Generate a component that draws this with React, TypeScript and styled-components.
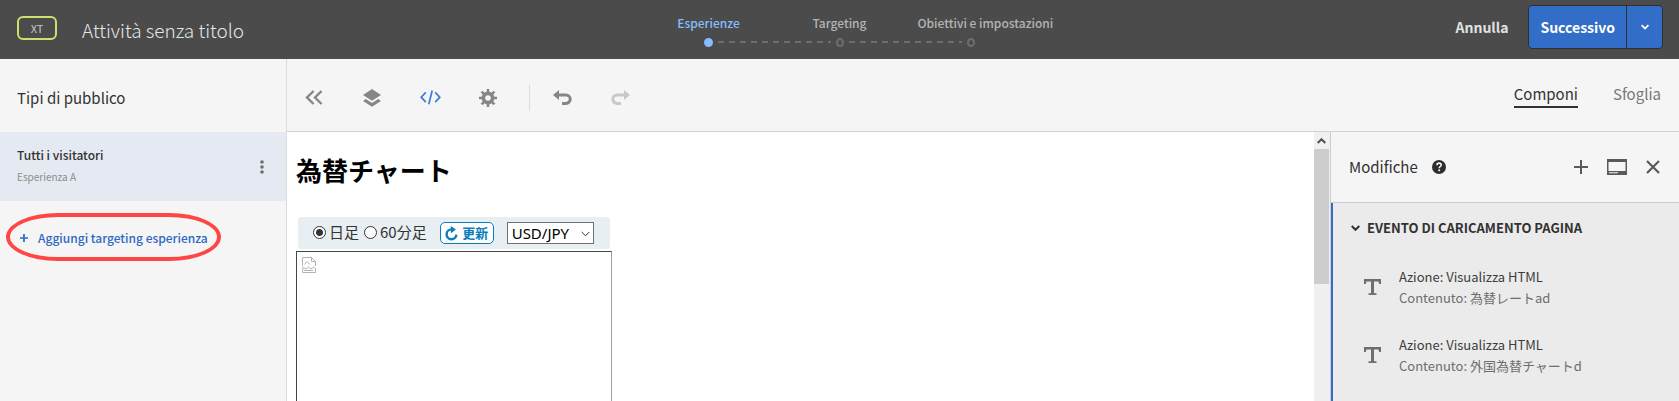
import React from "react";
import styled, { createGlobalStyle } from "styled-components";

const GlobalStyle = createGlobalStyle`
  *, *::before, *::after { box-sizing: border-box; }
  body {
    margin: 0;
    background: #f5f5f5;
    color: #323232;
    font-family: "Noto Sans CJK JP", "Noto Sans", sans-serif;
    font-size: 13px;
    line-height: 20px;
  }
  button, select, input { font: inherit; color: inherit; margin: 0; }
  button { border: 0; padding: 0; background: none; cursor: pointer; }
  h1, h2, h3, p, ul, ol { margin: 0; padding: 0; }
  ul, ol { list-style: none; }
  svg { display: block; }
`;

const Page = styled.div`
  display: flex;
  flex-direction: column;
  min-height: 100vh;
`;

/* ---------- top bar ---------- */

const TopBar = styled.header`
  display: grid;
  grid-template-columns: 1fr auto 1fr;
  height: 59px;
  background: #4b4b4b;
  color: #e6e6e6;
`;

const TitleGroup = styled.div`
  display: flex;
  align-items: center;
  gap: 25px;
  padding: 0 0 3px 17px;
`;

const TypeBadge = styled.span`
  width: 40px;
  height: 24px;
  border: 2px solid #d2dd6c;
  border-radius: 6px;
  font-size: 11px;
  line-height: 21px;
  text-align: center;
  color: #c8c8c8;
`;

const ActivityTitle = styled.h1`
  padding-top: 3px;
  font-size: 19px;
  font-weight: 300;
  line-height: 28px;
  white-space: nowrap;
`;

const Steps = styled.ol`
  display: flex;
  gap: 25px;
  padding-top: 14px;
`;

const Step = styled.li<{ $active?: boolean }>`
  position: relative;
  display: flex;
  flex-direction: column;
  align-items: center;
  width: 106px;
  font-size: 12px;
  font-weight: 500;
  color: ${(p) => (p.$active ? "#86bdff" : "#b4b4b4")};

  &:not(:last-child)::after {
    content: "";
    position: absolute;
    top: 27px;
    left: 62px;
    width: 113px;
    height: 2px;
    background: repeating-linear-gradient(90deg, #6e6e6e 0 6px, transparent 6px 11px);
  }
`;

const StepLabel = styled.span`
  min-width: 100%;
  text-align: center;
  white-space: nowrap;
  line-height: 18px;
  align-self: flex-start;
`;

const StepDot = styled.span<{ $active?: boolean }>`
  width: ${(p) => (p.$active ? "9px" : "8px")};
  height: 9px;
  margin-top: 6px;
  border-radius: 50%;
  border: 2px solid ${(p) => (p.$active ? "#86bdff" : "#6e6e6e")};
  background: ${(p) => (p.$active ? "#86bdff" : "transparent")};
`;

const TopActions = styled.div`
  display: flex;
  align-items: flex-start;
  justify-content: flex-end;
  gap: 20px;
  padding: 5px 16px 0 0;
  font-size: 14px;
  font-weight: 700;
`;

const CancelButton = styled.button`
  height: 44px;
  color: #e1e1e1;
`;

const SplitButton = styled.div`
  display: flex;
  height: 44px;
  border: 1px solid #2f2f2f;
  border-radius: 4px;
  background: #326ec8;
  color: #ffffff;
`;

const NextButton = styled.button`
  padding: 0 11px;
  border-right: 1px solid #2f2f2f;
`;

const NextMenuButton = styled.button`
  display: grid;
  place-items: center;
  width: 35px;
`;

/* ---------- left column ---------- */

const Body = styled.div`
  flex: 1;
  display: grid;
  grid-template-columns: 287px minmax(0, 1fr);
`;

const Sidebar = styled.aside`
  border-right: 1px solid #dcdcdc;
`;

const SidebarTitle = styled.h2`
  display: flex;
  align-items: center;
  height: 73px;
  padding: 5px 17px 0;
  font-size: 15px;
  font-weight: 400;
`;

const Audience = styled.div`
  display: flex;
  align-items: center;
  justify-content: space-between;
  height: 69px;
  padding: 0 17px;
  background: #e5e9f1;
`;

const AudienceText = styled.div`
  padding-bottom: 3px;
`;

const AudienceName = styled.p`
  font-size: 12px;
  font-weight: 500;
  line-height: 24px;
`;

const ExperienceName = styled.p`
  font-size: 10px;
  color: #8c8c8c;
`;

const MoreButton = styled.button`
  width: 9px;
  color: #6e6e6e;
`;

const AddTargeting = styled.button`
  position: relative;
  display: flex;
  align-items: center;
  gap: 10px;
  height: 48px;
  margin: 12px 0 0 6px;
  padding: 2px 13px 0 14px;
  font-size: 12px;
  font-weight: 500;
  color: #2d69c3;
  white-space: nowrap;
`;

const Highlight = styled.span`
  position: absolute;
  inset: 0;
  border: 4px solid #ff4646;
  border-radius: 52px / 24px;
`;

/* ---------- editor ---------- */

const Editor = styled.main`
  display: flex;
  flex-direction: column;
`;

const Toolbar = styled.div`
  display: flex;
  align-items: center;
  justify-content: space-between;
  height: 73px;
  padding: 0 18px 0 7px;
  border-bottom: 1px solid #d2d2d2;
`;

const ToolGroup = styled.div`
  display: flex;
  align-items: center;
  padding-top: 5px;
`;

const Tool = styled.button<{ $tone?: "active" | "disabled" }>`
  display: grid;
  place-items: center;
  width: 40px;
  height: 40px;
  margin-right: 18px;
  color: ${(p) =>
    p.$tone === "active" ? "#3c7dd7" : p.$tone === "disabled" ? "#c8c8c8" : "#868686"};
`;

const ToolDivider = styled.span`
  width: 1px;
  height: 26px;
  margin: 0 12px 0 3px;
  background: #dcdcdc;
`;

const Modes = styled.nav`
  display: flex;
  gap: 35px;
  font-size: 15px;
`;

const Mode = styled.a<{ $active?: boolean }>`
  line-height: 24px;
  text-decoration: none;
  color: ${(p) => (p.$active ? "#323232" : "#787878")};
  border-bottom: 2px solid ${(p) => (p.$active ? "#323232" : "transparent")};
`;

const Workspace = styled.div`
  flex: 1;
  display: grid;
  grid-template-columns: minmax(0, 1fr) 16px 349px;
`;

const Preview = styled.section`
  display: flex;
  flex-direction: column;
  align-items: flex-start;
  padding: 20px 9px 0;
  background: #ffffff;
  color: #000000;
`;

const PreviewTitle = styled.h2`
  font-size: 26px;
  line-height: 36px;
`;

const ChartForm = styled.form`
  display: flex;
  align-items: center;
  width: 312px;
  height: 32px;
  margin: 29px 0 2px 2px;
  padding-left: 15px;
  border-radius: 3px;
  background: #e8eff2;
  color: #333333;
  font-size: 15px;
`;

const Choice = styled.label`
  display: flex;
  align-items: center;
  gap: 3px;
  margin-right: 5px;
  padding-bottom: 2px;
  white-space: nowrap;
`;

const Radio = styled.input`
  appearance: none;
  width: 13px;
  height: 13px;
  border: 1px solid #333333;
  border-radius: 50%;
  background: #ffffff;

  &:checked {
    background: radial-gradient(circle, #333333 0 3px, #ffffff 4px);
  }
`;

const RefreshButton = styled.button`
  display: flex;
  align-items: center;
  justify-content: center;
  gap: 4px;
  width: 54px;
  height: 22px;
  margin: 0 13px 0 8px;
  border: 1px solid #0a7dbb;
  border-radius: 5px;
  background: #ffffff;
  color: #0a7dbb;
  font-size: 13px;
  font-weight: 700;
  white-space: nowrap;
`;

const SelectBox = styled.div`
  position: relative;
  width: 87px;
  height: 22px;

  svg {
    position: absolute;
    top: 9px;
    right: 4px;
    pointer-events: none;
  }
`;

const PairSelect = styled.select`
  appearance: none;
  display: block;
  width: 100%;
  height: 100%;
  padding: 0 4px;
  border: 1px solid #707070;
  border-radius: 0;
  background: #ffffff;
  color: #000000;
  font-family: "Noto Sans", sans-serif;
  font-size: 15px;
  line-height: 20px;
`;

const ChartFrame = styled.div`
  flex: 1;
  width: 316px;
  padding: 5px;
  border: 1px solid #464646;
  border-right-color: #a0a0a0;
  border-bottom: 0;
`;

const ScrollTrack = styled.div`
  display: flex;
  flex-direction: column;
  align-items: center;
  padding-right: 1px;
  background: #f0f0f0;
  color: #505050;
`;

const ScrollArrow = styled.span`
  display: grid;
  place-items: center;
  height: 17px;
`;

const ScrollThumb = styled.span`
  width: 100%;
  height: 135px;
  background: #cdcdcd;
`;

/* ---------- changes panel ---------- */

const Panel = styled.aside`
  display: flex;
  flex-direction: column;
  border-left: 1px solid #cdcdcd;
`;

const PanelHeader = styled.div`
  display: flex;
  align-items: center;
  height: 71px;
  padding: 0 19px 0 18px;
  border-bottom: 1px solid #cdcdcd;
  color: #5a5a5a;
`;

const PanelTitle = styled.h2`
  margin-right: 14px;
  font-size: 15px;
  font-weight: 400;
  color: #323232;
`;

const PanelTools = styled.div`
  display: flex;
  align-items: center;
  gap: 19px;
  margin-left: auto;
`;

const ChangeGroup = styled.section`
  flex: 1;
  border-left: 2px solid #326ec8;
  padding-top: 13px;
  background: #ebebeb;
`;

const GroupToggle = styled.button`
  display: flex;
  align-items: center;
  gap: 7px;
  height: 24px;
  margin: 0 0 25px 18px;
  font-size: 13px;
  font-weight: 700;
  white-space: nowrap;
`;

const Change = styled.li`
  display: flex;
  align-items: center;
  gap: 18px;
  height: 44px;
  margin-bottom: 24px;
  padding-left: 31px;
  color: #6e6e6e;
`;

const ChangeText = styled.div`
  line-height: 21px;
  white-space: nowrap;
`;

const ChangeAction = styled.p`
  color: #3c3c3c;
`;

/* ---------- icons ---------- */

const Chevron = ({ size = 9, width = 1, up = false }: { size?: number; width?: number; up?: boolean }) => (
  <svg width={size} height="6" viewBox="0 0 9 6" fill="none" stroke="currentColor" strokeWidth={width}>
    <path d={up ? "M.7 5 4.5 1.2 8.3 5" : "M.7 1 4.5 4.8 8.3 1"} />
  </svg>
);

const CollapseIcon = () => (
  <svg width="18" height="15" viewBox="0 0 18 15" fill="none" stroke="currentColor" strokeWidth="2.4">
    <path d="M8.6 1 2 7.5 8.6 14M16.6 1 10 7.5l6.6 6.5" />
  </svg>
);

const LayersIcon = () => (
  <svg width="18" height="18" viewBox="0 0 18 18" fill="currentColor">
    <path d="M9 0 18 5.9 9 11.8 0 5.9Z" />
    <path d="M2.8 10 9 14 15.2 10 18 11.9 9 17.8 0 11.9Z" />
  </svg>
);

const CodeIcon = () => (
  <svg width="21" height="15" viewBox="0 0 21 15" fill="none" stroke="currentColor" strokeWidth="1.7">
    <path d="M5.8 2.3 1.2 7.2l4.6 4.9M15.2 2.3l4.6 4.9-4.6 4.9M12.2.5 8.8 14.3" />
  </svg>
);

const GearIcon = () => (
  <svg width="18" height="18" viewBox="0 0 18 18" fill="none" stroke="currentColor">
    <circle cx="9" cy="9" r="4.6" strokeWidth="3.6" />
    <path
      strokeWidth="2.6"
      d="M9 0v3M9 15v3M0 9h3M15 9h3M2.6 2.6l2.2 2.2M13.2 13.2l2.2 2.2M2.6 15.4l2.2-2.2M13.2 4.8l2.2-2.2"
    />
  </svg>
);

const UndoIcon = ({ flip = false }: { flip?: boolean }) => (
  <svg width="19" height="15" viewBox="0 0 19 15">
    <g transform={flip ? "matrix(-1 0 0 1 19 0)" : undefined}>
      <path d="M0 5 6 0v10Z" fill="currentColor" />
      <path d="M5 5h8a4.2 4.2 0 0 1 0 8.4H9" fill="none" stroke="currentColor" strokeWidth="3" />
    </g>
  </svg>
);

const MoreIcon = () => (
  <svg width="4" height="14" viewBox="0 0 4 14" fill="currentColor">
    <circle cx="2" cy="2" r="1.8" />
    <circle cx="2" cy="7" r="1.8" />
    <circle cx="2" cy="12" r="1.8" />
  </svg>
);

const PlusIcon = ({ size, width }: { size: number; width: number }) => (
  <svg width={size} height={size} viewBox="0 0 14 14" stroke="currentColor" strokeWidth={width}>
    <path d="M7 0v14M0 7h14" />
  </svg>
);

const RefreshIcon = () => (
  <svg width="13" height="15" viewBox="0 0 13 15">
    <path d="M7 3.4H6.5A4.9 4.9 0 1 0 11.4 8.6" fill="none" stroke="currentColor" strokeWidth="2.4" />
    <path d="M5.8 0 11 3.6 5.8 7.2Z" fill="currentColor" />
  </svg>
);

const BrokenImageIcon = () => (
  <svg width="14" height="16" viewBox="0 0 14 16" fill="none" stroke="#b4b4b4">
    <path d="M.5 9V.5h9l4 4V9M9.5.5v4h4M.5 15.5h13v-4l-2-1.5-2.5 2-2.5-2-2.5 2-3-2z" />
    <path d="M2.5 7.5 5 4.5l3 3M2 13.5h9" />
  </svg>
);

const HelpIcon = () => (
  <svg width="14" height="14" viewBox="0 0 14 14">
    <circle cx="7" cy="7" r="7" fill="#2d2d2d" />
    <path d="M4.9 5.2C5 3.7 6 3.1 7.1 3.1c1.2 0 2.1.7 2.1 1.8 0 1.5-2 1.7-2 3.3" fill="none" stroke="#f5f5f5" strokeWidth="1.6" />
    <rect x="6.3" y="9.4" width="1.8" height="1.8" fill="#f5f5f5" />
  </svg>
);

const WindowIcon = () => (
  <svg width="20" height="16" viewBox="0 0 20 16">
    <path d="M0 0h20v16H0ZM1.500 3v9h17V3ZM2 13.200v1h9v-1Z" fill="currentColor" fillRule="evenodd" />
  </svg>
);

const CloseIcon = () => (
  <svg width="14" height="14" viewBox="0 0 14 14" stroke="currentColor" strokeWidth="2.2">
    <path d="M1 1l12 12M13 1 1 13" />
  </svg>
);

const TextIcon = () => (
  <svg width="17" height="16" viewBox="0 0 17 16" fill="currentColor">
    <path d="M0 0h17v5h-1.800L14.500 2.600H10v11.600h2.500V16h-8v-1.800H7V2.600H2.500L1.800 5H0Z" />
  </svg>
);

const changes = ["為替レートad", "外国為替チャートd"];

export default function App() {
  return (
    <Page>
      <GlobalStyle />
      <TopBar>
        <TitleGroup>
          <TypeBadge>XT</TypeBadge>
          <ActivityTitle>Attività senza titolo</ActivityTitle>
        </TitleGroup>
        <Steps>
          <Step $active>
            <StepLabel>Esperienze</StepLabel>
            <StepDot $active />
          </Step>
          <Step>
            <StepLabel>Targeting</StepLabel>
            <StepDot />
          </Step>
          <Step>
            <StepLabel>Obiettivi e impostazioni</StepLabel>
            <StepDot />
          </Step>
        </Steps>
        <TopActions>
          <CancelButton type="button">Annulla</CancelButton>
          <SplitButton>
            <NextButton type="button">Successivo</NextButton>
            <NextMenuButton type="button" aria-label="Altre opzioni">
              <Chevron width={2} size={8} />
            </NextMenuButton>
          </SplitButton>
        </TopActions>
      </TopBar>

      <Body>
        <Sidebar>
          <SidebarTitle>Tipi di pubblico</SidebarTitle>
          <Audience>
            <AudienceText>
              <AudienceName>Tutti i visitatori</AudienceName>
              <ExperienceName>Esperienza A</ExperienceName>
            </AudienceText>
            <MoreButton type="button" aria-label="Altro">
              <MoreIcon />
            </MoreButton>
          </Audience>
          <AddTargeting type="button">
            <PlusIcon size={8} width={3} />
            Aggiungi targeting esperienza
            <Highlight />
          </AddTargeting>
        </Sidebar>

        <Editor>
          <Toolbar>
            <ToolGroup>
              <Tool type="button" aria-label="Comprimi"><CollapseIcon /></Tool>
              <Tool type="button" aria-label="Livelli"><LayersIcon /></Tool>
              <Tool type="button" aria-label="Codice" $tone="active"><CodeIcon /></Tool>
              <Tool type="button" aria-label="Impostazioni"><GearIcon /></Tool>
              <ToolDivider />
              <Tool type="button" aria-label="Annulla modifica"><UndoIcon /></Tool>
              <Tool type="button" aria-label="Ripeti modifica" $tone="disabled"><UndoIcon flip /></Tool>
            </ToolGroup>
            <Modes>
              <Mode href="#componi" $active>Componi</Mode>
              <Mode href="#sfoglia">Sfoglia</Mode>
            </Modes>
          </Toolbar>

          <Workspace>
            <Preview>
              <PreviewTitle>為替チャート</PreviewTitle>
              <ChartForm>
                <Choice>
                  <Radio type="radio" name="period" defaultChecked />
                  日足
                </Choice>
                <Choice>
                  <Radio type="radio" name="period" />
                  60分足
                </Choice>
                <RefreshButton type="button">
                  <RefreshIcon />
                  更新
                </RefreshButton>
                <SelectBox>
                  <PairSelect aria-label="通貨ペア" defaultValue="USD/JPY">
                    <option>USD/JPY</option>
                  </PairSelect>
                  <Chevron />
                </SelectBox>
              </ChartForm>
              <ChartFrame>
                <BrokenImageIcon />
              </ChartFrame>
            </Preview>

            <ScrollTrack>
              <ScrollArrow><Chevron up width={2} /></ScrollArrow>
              <ScrollThumb />
            </ScrollTrack>

            <Panel>
              <PanelHeader>
                <PanelTitle>Modifiche</PanelTitle>
                <HelpIcon />
                <PanelTools>
                  <button type="button" aria-label="Aggiungi"><PlusIcon size={14} width={2} /></button>
                  <button type="button" aria-label="Finestra"><WindowIcon /></button>
                  <button type="button" aria-label="Chiudi"><CloseIcon /></button>
                </PanelTools>
              </PanelHeader>
              <ChangeGroup>
                <GroupToggle type="button" aria-expanded="true">
                  <Chevron width={2} />
                  EVENTO DI CARICAMENTO PAGINA
                </GroupToggle>
                <ul>
                  {changes.map((content) => (
                    <Change key={content}>
                      <TextIcon />
                      <ChangeText>
                        <ChangeAction>Azione: Visualizza HTML</ChangeAction>
                        <p>Contenuto: {content}</p>
                      </ChangeText>
                    </Change>
                  ))}
                </ul>
              </ChangeGroup>
            </Panel>
          </Workspace>
        </Editor>
      </Body>
    </Page>
  );
}
